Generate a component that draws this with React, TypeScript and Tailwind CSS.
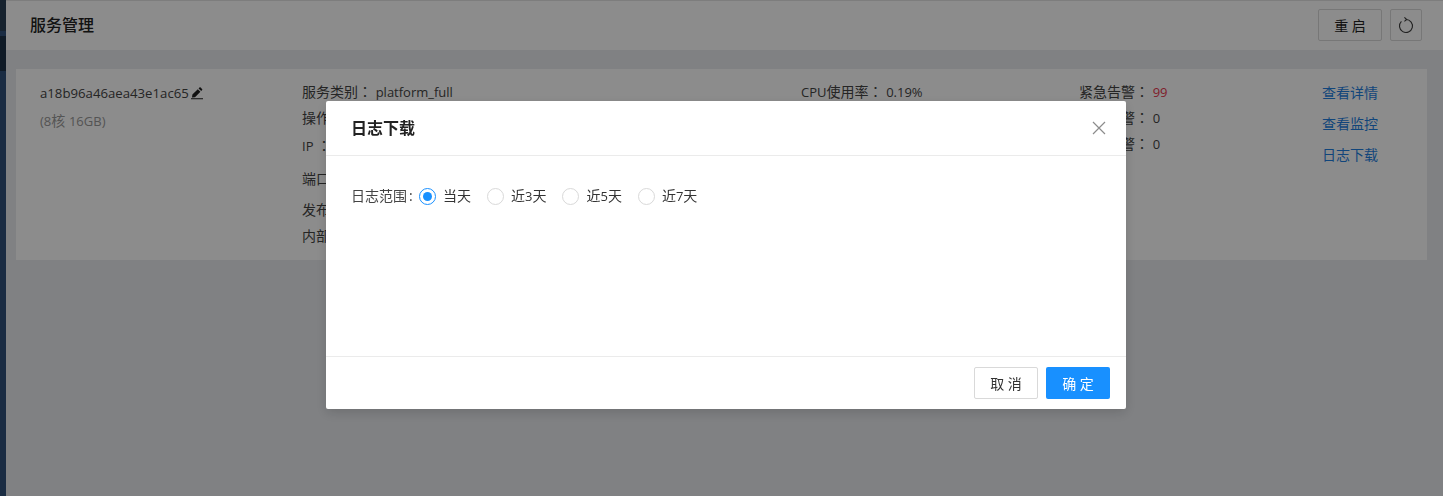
const font = '[font-family:"Open_Sans","Noto_Sans_CJK_SC",sans-serif]';

function EditIcon() {
  return (
    <svg width="14" height="14" viewBox="0 0 14 14" className="ml-[1px] shrink-0" aria-hidden="true">
      <path d="M2 10.4 2.4 7.6 7.8 2.2l2.6 2.6L5 10.2z M8.6 1.4l.8-.8a.9.9 0 0 1 1.3 0l1.3 1.3a.9.9 0 0 1 0 1.3l-.8.8z" fill="#1f1f1f" />
      <rect x="1" y="11" width="12" height="1.3" fill="#555" />
    </svg>
  );
}

function ReloadIcon() {
  return (
    <svg width="16" height="18" viewBox="0 0 16 18" fill="none" aria-hidden="true">
      <path d="M8 3.5A6.5 6.5 0 1 1 3.4 5.4" stroke="#3c3c3c" strokeWidth="1.1" />
      <path d="M6.4 1.4 8.7 3.5 6.4 5.4" stroke="#3c3c3c" strokeWidth="1.1" />
    </svg>
  );
}

// the centred fullwidth colon of the reference only exists in the TC font
function Colon() {
  return <span className='[font-family:"Noto_Sans_CJK_TC"]'>：</span>;
}

function Latin({ children }: { children: React.ReactNode }) {
  return <span className="text-[13px]">{children}</span>;
}

function Row({ className, children }: { className?: string; children: React.ReactNode }) {
  return <div className={`h-[20px] overflow-visible whitespace-nowrap ${className ?? ""}`}>{children}</div>;
}

function Radio({ label, checked }: { label: React.ReactNode; checked?: boolean }) {
  return (
    <label className="flex items-center gap-[7px]">
      <span
        className={`flex h-[17px] w-[17px] items-center justify-center rounded-full border bg-white ${
          checked ? "border-[#1890ff]" : "border-[#d9d9d9]"
        }`}
      >
        {checked && <span className="h-[9px] w-[9px] rounded-full bg-[#1890ff]" />}
      </span>
      <span className="text-[#333]">{label}</span>
    </label>
  );
}

export default function App() {
  return (
    <div className={`relative flex h-[496px] w-full overflow-hidden bg-[#e9ebef] text-[14px] text-[#333] ${font}`}>
      {/* sidebar strip */}
      <div className="flex w-[6px] shrink-0 flex-col bg-[#30507a]">
        <div className="h-[31px] bg-[#283f55]" />
        <div className="h-[5px] bg-[#30507a]" />
        <div className="h-[35px] bg-[#1c3045]" />
      </div>

      <div className="flex min-w-0 flex-1 flex-col">
        {/* header */}
        <div className="flex h-[50px] items-center justify-between border-t border-[#e4e4e4] bg-white pb-[1px] pl-[24px] pr-[21px]">
          <h1 className="pb-[1px] text-[16px] font-medium text-[#222]">服务管理</h1>
          <div className="flex gap-[8px]">
            <button className="h-[32px] w-[64px] rounded-[2px] border border-[#d9d9d9] text-[#222]">重 启</button>
            <button className="flex h-[32px] w-[32px] items-center justify-center rounded-[2px] border border-[#d9d9d9]">
              <ReloadIcon />
            </button>
          </div>
        </div>

        {/* service card */}
        <div className="ml-[10px] mr-[16px] mt-[19px] flex h-[191px] bg-white pl-[24px]">
          <div className="w-[262px] pt-[15px]">
            <div className="flex h-[20px] items-center text-[#444]">
              <span className="text-[13.2px]">a18b96a46aea43e1ac65</span>
              <EditIcon />
            </div>
            <div className="mt-[6px] text-[#999]">
              <Latin>(8</Latin>核 <Latin>16GB)</Latin>
            </div>
          </div>

          <div className="w-[499px] pt-[12px] leading-[20px] text-[#444]">
            <Row>
              服务类别<Colon /> <Latin>platform_full</Latin>
            </Row>
            <Row className="mt-[6px]">
              操作系统<Colon /> <Latin>linux</Latin>
            </Row>
            <Row className="mt-[8px]">
              <Latin>IP</Latin> <Colon /> <Latin>10.0.0.1</Latin>
            </Row>
            <Row className="mt-[13px]">
              端口<Colon /> <Latin>8080</Latin>
            </Row>
            <Row className="mt-[11px]">
              发布版本<Colon /> <Latin>1.0.0</Latin>
            </Row>
            <Row className="mt-[6px]">
              内部版本<Colon /> <Latin>1.0.0</Latin>
            </Row>
          </div>

          <div className="w-[278px] pt-[12px] leading-[20px] text-[#444]">
            <Row>
              <Latin>CPU</Latin>使用率<Colon /> <Latin>0.19%</Latin>
            </Row>
          </div>

          <div className="w-[243px] pt-[12px] leading-[20px] text-[#444]">
            <Row>
              紧急告警<Colon /> <Latin><span className="text-[#e8384f]">99</span></Latin>
            </Row>
            <Row className="mt-[6px]">
              重要告警<Colon /> <Latin>0</Latin>
            </Row>
            <Row className="mt-[6px]">
              次要告警<Colon /> <Latin>0</Latin>
            </Row>
          </div>

          <div className="flex flex-col gap-[11px] pt-[14px] leading-[20px] text-[#1f7fe0]">
            <a>查看详情</a>
            <a>查看监控</a>
            <a>日志下载</a>
          </div>
        </div>
      </div>

      {/* modal overlay */}
      <div className="fixed inset-0 bg-black/45">
        <div className="ml-[326px] mt-[101px] flex h-[308px] w-[800px] flex-col rounded-[2px] bg-white shadow-[0_4px_12px_rgba(0,0,0,0.15)]">
          <div className="flex h-[55px] shrink-0 items-center justify-between border-b border-[#ebebeb] pl-[25px] pr-[20px]">
            <h2 className="text-[16px] font-semibold text-[#222]">日志下载</h2>
            <svg width="14" height="14" viewBox="0 0 14 14" aria-label="关闭">
              <path d="M1 1l12 12M13 1 1 13" stroke="#8c8c8c" strokeWidth="1.2" />
            </svg>
          </div>
          <div className="flex flex-1 items-start pl-[25px] pt-[30px]">
            <span className="w-[68px] shrink-0 leading-[20px] text-[#444]">
              日志范围<span className="ml-[2px]">:</span>
            </span>
            <div className="flex gap-[16px] leading-[20px]">
              <Radio label="当天" checked />
              <Radio label={<>近<Latin>3</Latin>天</>} />
              <Radio label={<>近<Latin>5</Latin>天</>} />
              <Radio label={<>近<Latin>7</Latin>天</>} />
            </div>
          </div>
          <div className="flex h-[53px] shrink-0 items-center justify-end gap-[8px] border-t border-[#ebebeb] pr-[16px]">
            <button className="h-[32px] w-[64px] rounded-[2px] border border-[#d9d9d9] bg-white text-[#333]">取 消</button>
            <button className="h-[32px] w-[64px] rounded-[2px] bg-[#1890ff] text-white">确 定</button>
          </div>
        </div>
      </div>
    </div>
  );
}
